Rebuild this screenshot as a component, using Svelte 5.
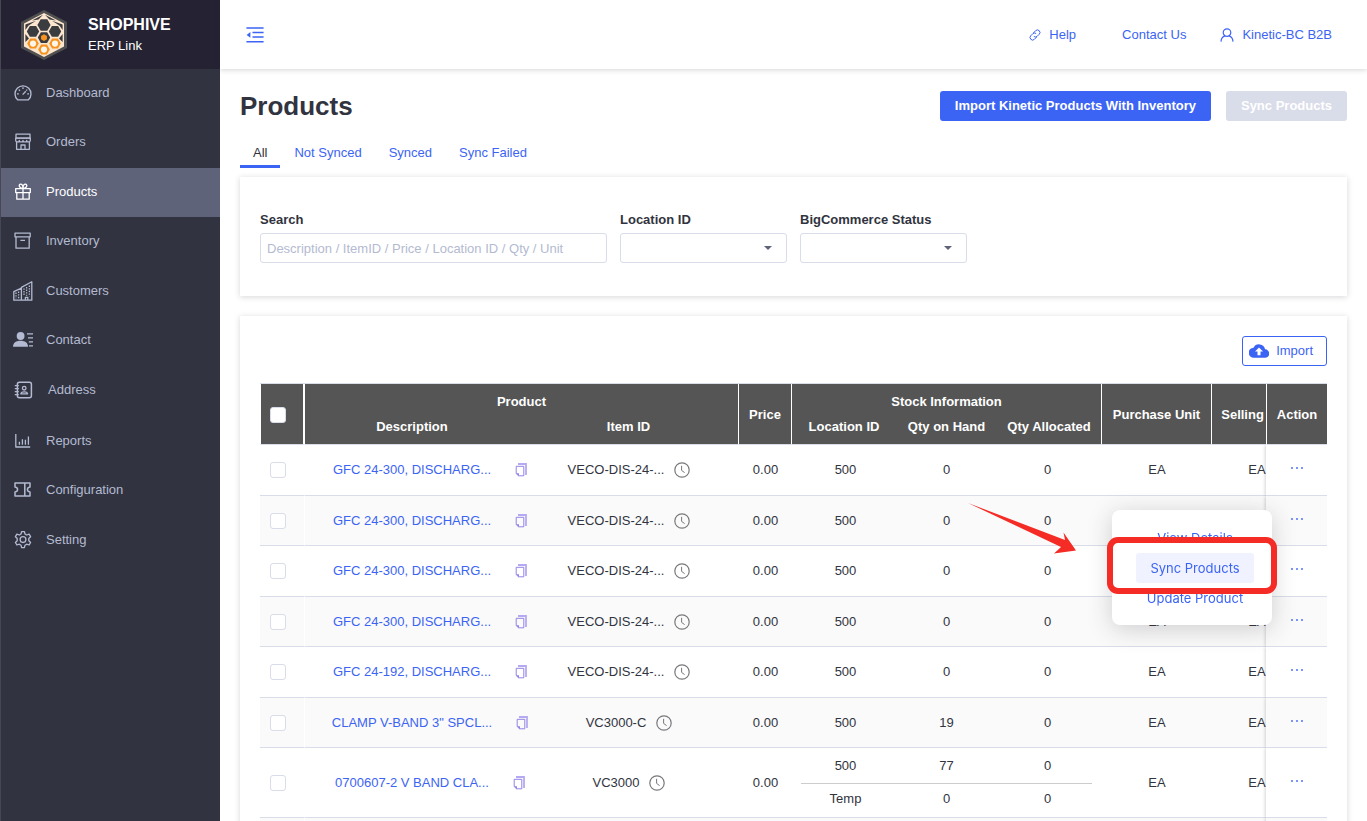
<script>
  const navItems = [
    { label: 'Dashboard', icon: 'dashboard' },
    { label: 'Orders', icon: 'orders', tall: true },
    { label: 'Products', icon: 'products', active: true },
    { label: 'Inventory', icon: 'inventory', tall: true },
    { label: 'Customers', icon: 'customers' },
    { label: 'Contact', icon: 'contact' },
    { label: 'Address', icon: 'address', wide: true },
    { label: 'Reports', icon: 'reports' },
    { label: 'Configuration', icon: 'configuration', tall: true },
    { label: 'Setting', icon: 'setting' }
  ];

  const tabs = ['All', 'Not Synced', 'Synced', 'Sync Failed'];
  let activeTab = $state('All');

  const single = [{ location: '500', onHand: '0', allocated: '0' }];
  const veco = 'VECO-DIS-24-...';

  const products = [
    { description: 'GFC 24-300, DISCHARG...', itemId: veco, stock: single },
    { description: 'GFC 24-300, DISCHARG...', itemId: veco, stock: single },
    { description: 'GFC 24-300, DISCHARG...', itemId: veco, stock: single },
    { description: 'GFC 24-300, DISCHARG...', itemId: veco, stock: single },
    { description: 'GFC 24-192, DISCHARG...', itemId: veco, stock: single },
    {
      description: 'CLAMP V-BAND 3" SPCL...',
      itemId: 'VC3000-C',
      stock: [{ location: '500', onHand: '19', allocated: '0' }]
    },
    {
      description: '0700607-2 V BAND CLA...',
      itemId: 'VC3000',
      stock: [
        { location: '500', onHand: '77', allocated: '0' },
        { location: 'Temp', onHand: '0', allocated: '0' }
      ]
    },
    { description: '0700607-2 V BAND CLA...', itemId: 'VC3000', stock: single }
  ];

  // pointy-top hexagon as a points string
  function hex(cx, cy, r) {
    const w = r * 0.866;
    return [
      [cx, cy - r], [cx + w, cy - r / 2], [cx + w, cy + r / 2],
      [cx, cy + r], [cx - w, cy + r / 2], [cx - w, cy - r / 2]
    ].map((p) => p.join(',')).join(' ');
  }

  // flat-top hexagon
  function flatHex(cx, cy, r) {
    const h = r * 0.866;
    return [
      [cx - r, cy], [cx - r / 2, cy - h], [cx + r / 2, cy - h],
      [cx + r, cy], [cx + r / 2, cy + h], [cx - r / 2, cy + h]
    ].map((p) => p.join(',')).join(' ');
  }
</script>

{#snippet navIcon(name)}
  <svg class="nav-icon" viewBox="0 0 20 20" fill="none" stroke="currentColor" stroke-width="1.3" stroke-linejoin="round" aria-hidden="true">
    {#if name === 'dashboard'}
      <path d="M4.6 16.8A8 8 0 1 1 15.4 16.8Z" />
      <path d="M10 4.2v1.8M4 10.8h1.8M14.2 10.8H16M5.8 6.6l1.2 1.2M14.2 6.6l-1 1M9.6 11.6l3.2-3.4" />
    {:else if name === 'orders'}
      <path d="M3 2.2h14v4H3zM3.6 9.5v7.8h12.8V9.5M8 17v-4h4v4" />
      <path d="M2.7 6.2v2.2c0 2 3.6 2 3.6 0c0 2 3.7 2 3.7 0c0 2 3.7 2 3.7 0c0 2 3.6 2 3.6 0V6.2z" />
    {:else if name === 'products'}
      <path d="M2.7 6.6h14.6v4H2.7zM3.8 10.6v6.6h12.4v-6.6M10 6.6v10.6" />
      <path d="M10 6.4C5.6 6.4 5.4 2.2 7.6 2.2C9.2 2.2 10 4 10 6.4C10 4 10.8 2.2 12.4 2.2C14.6 2.2 14.4 6.4 10 6.4" />
    {:else if name === 'inventory'}
      <path d="M2 2.2h15.2v3.6H2zM3 5.8v11.4h13.2V5.8M7.4 9.4h4.6" />
    {:else if name === 'customers'}
      <path d="M.8 19.2v-8.6l7.6-3.4v12zM8.4 19.2V6.4l10.4-5.6v18.4H.8M12.4 19v-2.6h2.4V19" />
      <path d="M3 11.6v5.6M5.6 10.6v6.6M11 7.4v7.4M13.6 6v8.8M16.4 4.6v10.6" stroke-dasharray="1.4 1.2" />
    {:else if name === 'contact'}
      <g fill="currentColor" stroke="none">
        <circle cx="7.6" cy="6" r="3.9" />
        <path d="M0 16.8c0-4 3-6 7.5-6s7.500 2 7.500 6z" />
      </g>
      <path d="M14 3.8h6M15 7.8h5M15.8 11.8H20M16 15.8h4" />
    {:else if name === 'address'}
      <rect x="4.4" y="2.2" width="14" height="15.6" rx="2" stroke-width="1.5" />
      <circle cx="11.2" cy="8.2" r="1.8" />
      <path d="M7.8 13.8c.6-2.6 6.2-2.6 6.8 0zM1.8 5.6h4M1.8 8.6h4M1.8 11.6h4M1.8 14.6h4" />
    {:else if name === 'reports'}
      <path d="M2.8 3v13h14.4M6.4 13.8v-3M9.4 13.8V8.2M12.4 13.8v-5M15.4 13.8V5.6" />
    {:else if name === 'configuration'}
      <path stroke-width="1.5" d="M2 3h15v4c-3.4.6-3.4 4.4 0 5v4H2v-4c3.4-.6 3.4-4.4 0-5zM11.8 3v13" />
    {:else if name === 'setting'}
      <circle cx="10" cy="9.6" r="2.9" />
      <path d="M8.6 1.6h2.8l.6 2.4 1.6 1 2.5-.8 1.5 2.5-1.8 1.8v2.2l1.8 1.8-1.5 2.5-2.5-.8-1.6 1-.6 2.4H8.6L8 15.2l-1.6-1-2.5.8-1.5-2.5 1.8-1.8V8.5L2.4 6.7l1.5-2.5 2.5.8L8 4z" />
    {/if}
  </svg>
{/snippet}

<div class="app">
  <aside class="sidebar">
    <div class="brand">
      <svg class="logo" viewBox="0 0 48 50" aria-hidden="true">
        <polygon points="24,0 47,12 47,38 24,50 1,38 1,12" fill="#505050" />
        <polygon points="24,3 44,13.5 44,36.5 24,47 4,36.5 4,13.5" fill="#fde6cf" />
        <g fill="#3b3c3f">
          <polygon points="23,4.8 12,10.6 18.5,9.4" />
          <polygon points="25,4.8 36,10.6 29.5,9.4" />
          <polygon points="5.4,14.6 16,10.8 8.6,15.4 5.4,20" />
          <polygon points="42.6,14.6 32,10.8 39.4,15.4 42.6,20" />
          <polygon points={flatHex(24, 15, 6.6)} />
          <polygon points={flatHex(13, 21.4, 6.2)} />
          <polygon points={flatHex(35, 21.4, 6.2)} />
          <polygon points={flatHex(24, 27.6, 6.2)} />
          <polygon points="5.4,24 9,28.6 5.4,32" />
          <polygon points="42.6,24 39,28.6 42.6,32" />
        </g>
        <polygon points={hex(24, 27.6, 3.4)} fill="#f7931e" />
        <g fill="#f7931e">
          <polygon points={flatHex(13, 33.6, 5.8)} />
          <polygon points={flatHex(35, 33.6, 5.8)} />
          <polygon points={flatHex(24, 39.6, 5.8)} />
        </g>
        <g fill="#fff6ea">
          <circle cx="13" cy="33.6" r="3.1" />
          <circle cx="35" cy="33.6" r="3.1" />
          <circle cx="24" cy="39.6" r="3.1" />
        </g>
      </svg>
      <div class="brand-text">
        <strong>SHOPHIVE</strong>
        <span>ERP Link</span>
      </div>
    </div>
    <nav>
      {#each navItems as item}
        <a href="#{item.icon}" class="nav-item" class:active={item.active} class:tall={item.tall} class:wide={item.wide}>
          {@render navIcon(item.icon)}
          {item.label}
        </a>
      {/each}
    </nav>
  </aside>

  <div class="main">
    <header class="topbar">
      <button class="collapse" aria-label="Collapse menu">
        <svg width="18" height="16" viewBox="0 0 18 16" fill="none" stroke="currentColor" stroke-width="1.4">
          <path d="M.4 1h17.2M6.5 5.5h11.1M6.5 10h11.1M.4 14.8h17.2" />
          <path d="M4.4 5v5.8L.6 7.9z" fill="currentColor" stroke="none" />
        </svg>
      </button>
      <div class="top-links">
        <a href="#help">
          <svg width="12" height="12" viewBox="0 0 12 12" fill="none" stroke="currentColor" stroke-width="1" stroke-linecap="round" aria-hidden="true">
            <path d="M4.6 3.7l2-2a2.5 2.5 0 0 1 3.6 3.6l-2 2a2.5 2.5 0 0 1-3 .4" />
            <path d="M7.4 8.3l-2 2a2.5 2.5 0 0 1-3.6-3.6l2-2a2.5 2.5 0 0 1 3-.4" />
          </svg>
          Help
        </a>
        <a href="#contact-us" class="contact-us">Contact Us</a>
        <a href="#account">
          <svg width="14" height="14" viewBox="0 0 14 14" fill="none" stroke="currentColor" stroke-width="1.2" aria-hidden="true">
            <circle cx="7" cy="4.6" r="3.8" />
            <path d="M1 13.6c.2-3.4 1.8-5.2 4-5.8M13 13.6c-.2-3.4-1.8-5.2-4-5.8" />
          </svg>
          Kinetic-BC B2B
        </a>
      </div>
    </header>

    <main class="content">
      <div class="title-row">
        <h1>Products</h1>
        <div class="title-actions">
          <button class="btn-primary">Import Kinetic Products With Inventory</button>
          <button class="btn-primary" disabled>Sync Products</button>
        </div>
      </div>

      <div class="tabs" role="tablist">
        {#each tabs as tab}
          <button role="tab" class="tab" class:selected={activeTab === tab} aria-selected={activeTab === tab} onclick={() => (activeTab = tab)}>
            {tab}
          </button>
        {/each}
      </div>

      <section class="card filters">
        <div class="field search">
          <label for="search">Search</label>
          <input id="search" type="text" placeholder="Description / ItemID / Price / Location ID / Qty / Unit" />
        </div>
        <div class="field">
          <label for="location">Location ID</label>
          <div class="select-wrap">
            <select id="location"><option value=""></option><option>500</option><option>Temp</option></select>
          </div>
        </div>
        <div class="field">
          <label for="status">BigCommerce Status</label>
          <div class="select-wrap">
            <select id="status"><option value=""></option><option>Synced</option><option>Not Synced</option></select>
          </div>
        </div>
      </section>

      <section class="card listing">
        <button class="btn-import">
          <svg width="20" height="14" viewBox="0 0 20 14" aria-hidden="true">
            <path fill="currentColor" d="M16.1 5.3A6.2 6.2 0 0 0 4.5 3.7 5 5 0 0 0 5 13.8h10.800a4.2 4.2 0 0 0 .3-8.5z" />
            <path fill="#fff" d="M10 3.600l4 4h-2.500v3.600h-3V7.600H6z" />
          </svg>
          Import
        </button>

        <div class="table-scroll">
          <table>
            <colgroup>
              <col class="c-check" /><col class="c-desc" /><col class="c-item" /><col class="c-price" />
              <col class="c-loc" /><col class="c-hand" /><col class="c-alloc" />
              <col class="c-unit" /><col class="c-selling" /><col class="c-action" />
            </colgroup>
            <thead>
              <tr>
                <th rowspan="2" class="check"><input type="checkbox" aria-label="Select all" /></th>
                <th colspan="2" class="group sep">Product</th>
                <th rowspan="2" class="sep">Price</th>
                <th colspan="3" class="group sep">Stock Information</th>
                <th rowspan="2" class="sep">Purchase Unit</th>
                <th rowspan="2">Selling Unit</th>
                <th rowspan="2" class="action">Action</th>
              </tr>
              <tr>
                <th class="sub">Description</th>
                <th class="sub sep">Item ID</th>
                <th class="sub">Location ID</th>
                <th class="sub">Qty on Hand</th>
                <th class="sub sep">Qty Allocated</th>
              </tr>
            </thead>
            <tbody>
              {#each products as product}
                <tr>
                  <td class="check"><input type="checkbox" aria-label="Select {product.description}" /></td>
                  <td>
                    <div class="cell-flex">
                      <a href="#product">{product.description}</a>
                      <button class="copy" aria-label="Copy description">
                        <svg width="12" height="14" viewBox="0 0 12 14" fill="none" aria-hidden="true">
                          <path d="M3 1h8v11" stroke="#b5aaf2" stroke-width="1.8" />
                          <path d="M1.2 3.3h7.6v9.5H3.6L1.2 10.6z" stroke="#9184e6" stroke-width="1" />
                          <path d="M1 10.2h3v3z" fill="#9184e6" />
                        </svg>
                      </button>
                    </div>
                  </td>
                  <td>
                    <div class="cell-flex">
                      <span>{product.itemId}</span>
                      <svg class="clock" width="16" height="16" viewBox="0 0 16 16" fill="none" stroke="#77787c" aria-hidden="true">
                        <circle cx="8" cy="8" r="7.2" stroke-width="1.2" />
                        <path d="M7.6 3.8v4.6l3 2.2" />
                      </svg>
                    </div>
                  </td>
                  <td>0.00</td>
                  <td colspan="3" class="stock">
                    {#each product.stock as line}
                      <div class="stock-line">
                        <span>{line.location}</span>
                        <span>{line.onHand}</span>
                        <span>{line.allocated}</span>
                      </div>
                    {/each}
                  </td>
                  <td>EA</td>
                  <td>EA</td>
                  <td class="action">
                    <button class="more" aria-label="Actions">
                      <svg width="14" height="2" viewBox="0 0 14 2" fill="currentColor" aria-hidden="true">
                        <circle cx="2" cy="1" r=".9" /><circle cx="7" cy="1" r=".9" /><circle cx="12" cy="1" r=".9" />
                      </svg>
                    </button>
                  </td>
                </tr>
              {/each}
            </tbody>
          </table>
        </div>

        <div class="menu">
          <button>View Details</button>
          <button class="hovered">Sync Products</button>
          <button>Update Product</button>
        </div>
        <div class="highlight"></div>
        <svg class="arrow" width="108" height="54" viewBox="0 0 108 54" fill="#f52c25" aria-hidden="true">
          <path d="M0 0L97 37L95.5 29.5L108 47.5L86 50.5L93 44Z" />
        </svg>
      </section>
    </main>
  </div>
</div>

<style>
  :global(body) {
    background: #fff;
  }

  .app {
    display: flex;
    height: 100vh;
    overflow: hidden;
    font-family: "Liberation Sans", Arial, Helvetica, sans-serif;
    font-size: 13px;
    line-height: 16px;
    color: #313440;
  }

  button,
  input,
  select {
    font: inherit;
    margin: 0;
    box-sizing: border-box;
  }

  button {
    border: none;
    background: none;
    padding: 0;
    cursor: pointer;
  }

  a {
    color: #3c64f4;
    text-decoration: none;
  }

  /* sidebar */
  .sidebar {
    flex: 0 0 220px;
    box-sizing: border-box;
    background: #313440;
    border-left: 1px solid #454854;
  }

  .brand {
    display: flex;
    align-items: center;
    gap: 20px;
    height: 69px;
    padding-left: 19px;
    background: #242233;
    color: #fff;
  }

  .logo {
    width: 48px;
    height: 50px;
  }

  .brand-text {
    display: flex;
    flex-direction: column;
    gap: 3px;
  }

  .brand-text strong {
    font-size: 16px;
    line-height: 20px;
  }

  .nav-item {
    display: flex;
    align-items: center;
    gap: 13px;
    box-sizing: border-box;
    height: 49px;
    padding: 0 12px 2px;
    color: #b4bad1;
  }

  .nav-item.tall {
    height: 50px;
  }

  .nav-item.wide {
    height: 52px;
    gap: 15px;
  }

  .nav-item.active {
    background: #5e637a;
    color: #fff;
  }

  .nav-icon {
    width: 20px;
    height: 20px;
  }

  /* top bar */
  .main {
    flex: 1;
    min-width: 0;
    display: flex;
    flex-direction: column;
  }

  .topbar {
    display: flex;
    align-items: center;
    justify-content: space-between;
    flex: 0 0 69px;
    padding: 0 35px 0 26px;
    box-shadow: 0 1px 5px rgba(49, 52, 64, 0.2);
  }

  .collapse {
    display: flex;
    color: #3c64f4;
  }

  .top-links {
    display: flex;
    gap: 34px;
  }

  .top-links a {
    display: flex;
    align-items: center;
    gap: 8px;
  }

  .top-links .contact-us {
    padding-left: 12px;
  }

  /* content */
  .content {
    padding: 22px 20px 0;
  }

  .title-row {
    display: flex;
    justify-content: space-between;
    align-items: center;
  }

  h1 {
    margin: 0;
    font-size: 26px;
    line-height: 30px;
  }

  .title-actions {
    display: flex;
    gap: 15px;
  }

  .btn-primary {
    height: 30px;
    padding: 0 15px;
    border-radius: 3px;
    background: #3c64f4;
    color: #fff;
    font-weight: bold;
  }

  .btn-primary:disabled {
    background: #d9dce9;
  }

  .tabs {
    display: flex;
    gap: 1px;
    margin-top: 16px;
  }

  .tab {
    padding: 8px 13px 4px;
    border-bottom: 3px solid transparent;
    color: #3c64f4;
  }

  .tab.selected {
    color: #313440;
    border-bottom-color: #3c64f4;
  }

  .card {
    background: #fff;
    box-shadow: 0 1px 6px rgba(49, 52, 64, 0.2);
  }

  .filters {
    display: flex;
    gap: 13px;
    margin-top: 9px;
    padding: 35px 20px 33px;
  }

  .field {
    display: flex;
    flex-direction: column;
    gap: 5px;
    width: 167px;
  }

  .field.search {
    width: 347px;
  }

  label {
    font-weight: bold;
  }

  input[type="text"],
  select {
    width: 100%;
    height: 30px;
    padding: 0 6px;
    border: 1px solid #d9dce9;
    border-radius: 3px;
    background: #fff;
    color: #313440;
  }

  input::placeholder {
    color: #b4bad1;
    opacity: 1;
  }

  .select-wrap {
    position: relative;
  }

  select {
    appearance: none;
  }

  .select-wrap::after {
    content: "";
    position: absolute;
    top: 13px;
    right: 15px;
    border: 4px solid transparent;
    border-top-color: #5e637a;
    border-bottom: none;
    pointer-events: none;
  }

  /* product list */
  .listing {
    position: relative;
    margin-top: 20px;
    padding: 20px;
  }

  .btn-import {
    display: flex;
    align-items: center;
    gap: 7px;
    height: 30px;
    margin-left: auto;
    padding: 0 13px 0 6px;
    border: 1px solid #3c64f4;
    border-radius: 3px;
    color: #3c64f4;
  }

  .table-scroll {
    margin-top: 17px;
    overflow-x: auto;
  }

  table {
    width: 1103px;
    min-width: 100%;
    table-layout: fixed;
    border-collapse: separate;
    border-spacing: 0;
    border-top: 1px solid #d9dce9;
    text-align: center;
    white-space: nowrap;
  }

  .c-check { width: 45px; }
  .c-desc { width: 214px; }
  .c-item { width: 220px; }
  .c-price { width: 53px; }
  .c-loc { width: 104px; }
  .c-hand { width: 101px; }
  .c-alloc { width: 105px; }
  .c-unit { width: 110px; }
  .c-selling { width: 90px; }
  .c-action { width: 61px; }

  th {
    padding: 2px 0 0;
    height: 58px;
    background: #555;
    color: #fff;
    border-bottom: 1px solid #d9dce9;
  }

  th.group {
    height: auto;
    padding: 10px 0 4px;
    border-bottom: none;
  }

  th.sub {
    height: auto;
    padding: 5px 0 9px;
  }

  .sep {
    border-right: 1px solid #fff;
  }

  td {
    height: 50px;
    padding: 0;
    background: #fff;
    border-bottom: 1px solid #d9dce9;
  }

  tbody tr:nth-child(even) td {
    height: 49px;
    background: #fafafa;
  }

  th.check {
    padding-right: 8px;
    border-left: 1px solid #fff;
    border-right: 2px solid #fff;
  }

  td.check {
    padding-right: 8px;
    border-right: 1px solid #fff;
  }

  input[type="checkbox"] {
    appearance: none;
    width: 16px;
    height: 16px;
    border: 1px solid #d9dce9;
    border-radius: 3px;
    background: #fff;
    vertical-align: middle;
  }

  input[type="checkbox"]:checked {
    background: #3c64f4;
  }

  .cell-flex {
    display: flex;
    align-items: center;
    justify-content: center;
  }

  /* icon hangs outside so the description itself stays centred */
  .copy {
    display: flex;
    margin-left: 24px;
    margin-right: -36px;
  }

  .clock {
    margin-left: 10px;
  }

  .stock {
    padding: 0 4px 0 3px;
  }

  .stock-line {
    display: grid;
    grid-template-columns: repeat(3, 1fr);
  }

  .stock-line + .stock-line {
    margin-top: 9px;
    padding-top: 8px;
    background: linear-gradient(#ccc, #ccc) center top / calc(100% - 12px) 1px no-repeat;
  }

  .stock:has(.stock-line + .stock-line) {
    height: 69px;
  }

  .action {
    position: sticky;
    right: 0;
  }

  th.action {
    border-left: 1px solid #fff;
  }

  td.action {
    box-shadow: -1px 0 3px rgba(49, 52, 64, 0.2);
    clip-path: inset(0 0 0 -4px);
  }

  .more {
    color: #3c64f4;
    padding-bottom: 10px;
    vertical-align: middle;
  }

  /* row menu */
  .menu {
    position: absolute;
    top: 194px;
    right: 75px;
    display: flex;
    flex-direction: column;
    align-items: center;
    box-sizing: border-box;
    width: 160px;
    padding: 13px 0 12px 6px;
    border-radius: 8px;
    background: #fff;
    box-shadow: 0 4px 24px rgba(49, 52, 64, 0.22);
    font-family: Inter, sans-serif;
  }

  .menu button {
    height: 30px;
    padding: 0 14px;
    border-radius: 3px;
    color: #3c64f4;
  }

  .menu .hovered {
    background: #f0f3ff;
  }

  .highlight {
    position: absolute;
    top: 221px;
    right: 70px;
    box-sizing: border-box;
    width: 170px;
    height: 57px;
    border: 6px solid #f52c25;
    border-radius: 11px;
  }

  .arrow {
    position: absolute;
    top: 187px;
    right: 271px;
  }
</style>
